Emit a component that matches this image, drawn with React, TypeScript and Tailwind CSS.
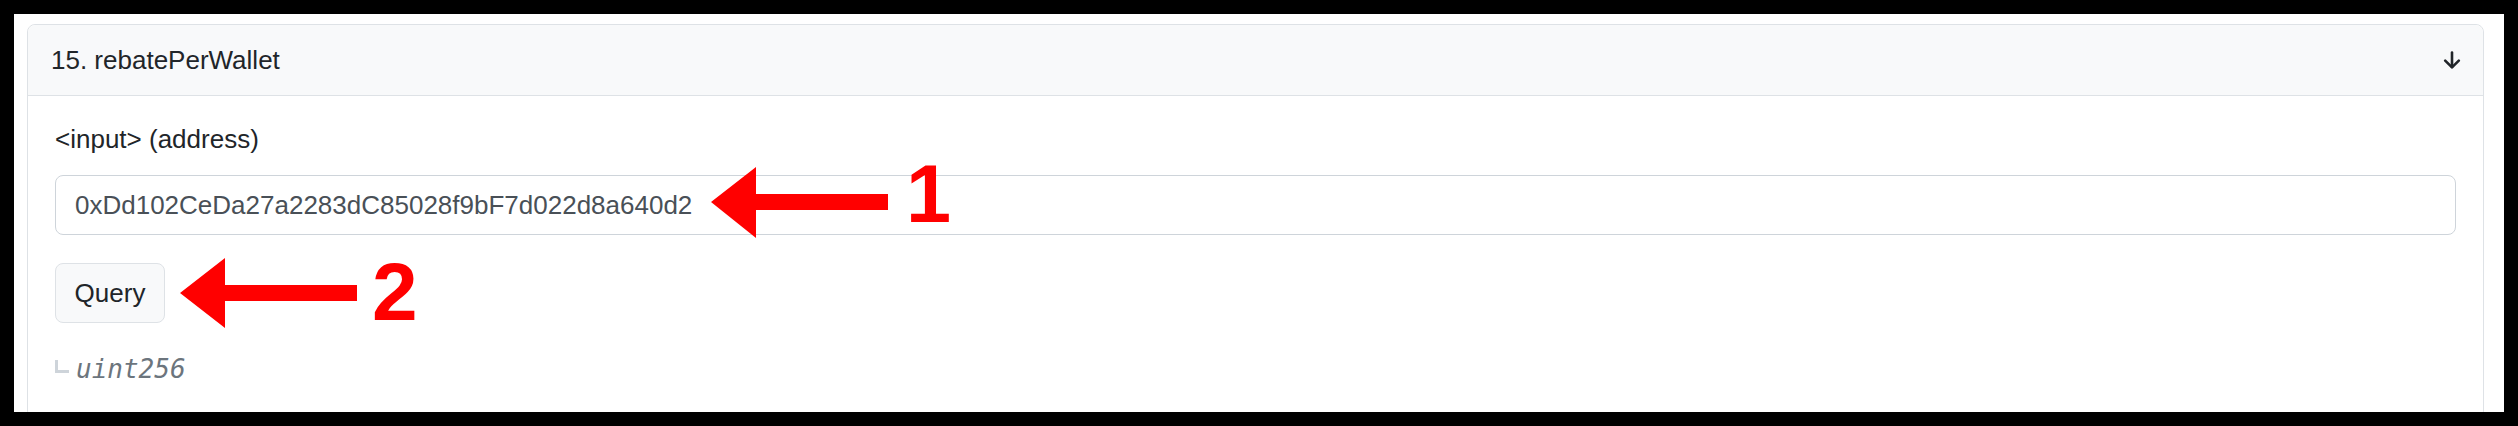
import React from "react";

const sans = "font-['Liberation_Sans',Arial,sans-serif]";

const ArrowDownIcon = () => (
  <svg width="18" height="18" viewBox="0 0 18 18" fill="none">
    <path d="M9 1.5V16" stroke="#212529" strokeWidth="2.6" strokeLinecap="round" />
    <path
      d="M2.2 9.6L9 16.4L15.8 9.6"
      stroke="#212529"
      strokeWidth="2.6"
      strokeLinecap="round"
      strokeLinejoin="round"
    />
  </svg>
);

const Annotations = () => (
  <>
    <svg className="pointer-events-none absolute inset-0" width="2518" height="426">
      <polygon
        points="711,202 756,167 756,194 888,194 888,210 756,210 756,238"
        fill="#ff0000"
      />
      <polygon
        points="180,293 225,258 225,285 357,285 357,301 225,301 225,328"
        fill="#ff0000"
      />
    </svg>
    <span
      className={`${sans} absolute left-[906px] top-[154px] text-[81px] leading-none font-bold text-[#ff0000]`}
    >
      1
    </span>
    <span
      className={`${sans} absolute left-[372px] top-[251px] text-[82px] leading-none font-bold text-[#ff0000]`}
    >
      2
    </span>
  </>
);

export default function App() {
  return (
    <div className="relative h-[426px] w-[2518px] overflow-hidden bg-black p-[14px]">
      <div className="h-full overflow-hidden bg-white pl-[13px] pr-[20px] pt-[10px]">
        <div className={`${sans} rounded-[8px] border border-[#dee2e6]`}>
          {/* card header */}
          <div className="flex h-[71px] items-center justify-between rounded-t-[8px] border-b border-[#dee2e6] bg-[#f8f9fa] pl-[23px] pr-[22px]">
            <span className="text-[26px] leading-[39px] text-[#212529]">15. rebatePerWallet</span>
            <ArrowDownIcon />
          </div>

          {/* card body */}
          <div className="flex flex-col items-start px-[27px] pb-[30px] pt-[24px]">
            <label htmlFor="address" className="text-[26px] leading-[39px] text-[#212529]">
              {"<input> (address)"}
            </label>
            <input
              id="address"
              readOnly
              value="0xDd102CeDa27a2283dC85028f9bF7d022d8a640d2"
              className="mt-[16px] h-[60px] w-full rounded-[8px] border border-[#ced4da] bg-white px-[19px] text-[26px] text-[#495057] outline-none"
            />
            <button className="mt-[28px] flex h-[60px] w-[110px] items-center justify-center rounded-[8px] border border-[#dee2e6] bg-[#f8f9fa] text-[26px] text-[#212529]">
              Query
            </button>
            <div className="mt-[27px] flex items-start">
              <span className="mt-[10px] h-[13px] w-[14px] border-b-[3px] border-l-[3px] border-[#ced4da]" />
              <span className="ml-[7px] font-['DejaVu_Sans_Mono',monospace] text-[26px] leading-[38px] italic text-[#6c757d]">
                uint256
              </span>
            </div>
          </div>
        </div>
      </div>
      <Annotations />
    </div>
  );
}
